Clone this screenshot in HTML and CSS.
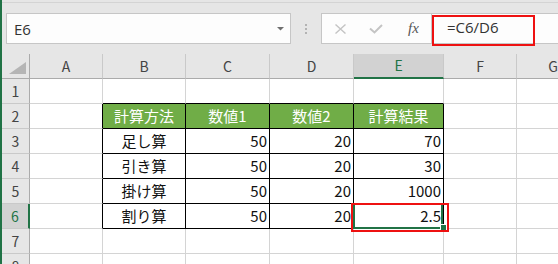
FILE: index.html
```html
<!DOCTYPE html>
<html lang="ja">
<head>
    <meta charset="UTF-8">
    <title>計算方法</title>
    <link rel="stylesheet" href="styles.css">
</head>
<body>
<div class="app">
    <div class="ribbon-edge"></div>

    <!-- Formula bar -->
    <div class="formula-bar">
        <div class="name-box">
            <span class="cell-ref">E6</span>
            <svg class="dropdown" width="7" height="4" viewBox="0 0 7 4"><polygon points="0,0 7,0 3.5,3.5" fill="#6f6f6f"/></svg>
        </div>
        <div class="grip"><i></i><i></i><i></i></div>
        <div class="fx-buttons">
            <span class="slot">
                <svg width="11" height="10" viewBox="0 0 11 10"><path d="M0.5 0.5 L10.5 9.5 M10.5 0.5 L0.5 9.5" stroke="#c4c4c4" stroke-width="1.4" fill="none"/></svg>
            </span>
            <span class="slot">
                <svg width="14" height="10" viewBox="0 0 14 10"><polyline points="1,4.5 5.5,8.5 13,1" stroke="#c4c4c4" stroke-width="2" fill="none"/></svg>
            </span>
            <span class="slot fx">fx</span>
        </div>
        <div class="formula-input">
            <span class="formula">=C6/D6</span>
            <div class="mark formula-mark"></div>
        </div>
    </div>

    <!-- Worksheet -->
    <div class="sheet">
        <div class="cell corner">
            <svg width="28" height="24" viewBox="0 0 28 24"><polygon points="24,8 24,20 7,20" fill="#b5b5b5"/></svg>
        </div>
        <div class="cell ch">A</div>
        <div class="cell ch">B</div>
        <div class="cell ch">C</div>
        <div class="cell ch">D</div>
        <div class="cell ch sel">E</div>
        <div class="cell ch">F</div>
        <div class="cell ch">G</div>

        <div class="cell rh">1</div>
        <div class="cell"></div>
        <div class="cell edge-b"></div>
        <div class="cell edge-b"></div>
        <div class="cell edge-b"></div>
        <div class="cell edge-b"></div>
        <div class="cell"></div>
        <div class="cell"></div>

        <div class="cell rh">2</div>
        <div class="cell edge-r"></div>
        <div class="cell tb head">計算方法</div>
        <div class="cell tb head">数値1</div>
        <div class="cell tb head">数値2</div>
        <div class="cell tb head">計算結果</div>
        <div class="cell"></div>
        <div class="cell"></div>

        <div class="cell rh">3</div>
        <div class="cell edge-r"></div>
        <div class="cell tb txt">足し算</div>
        <div class="cell tb num">50</div>
        <div class="cell tb num">20</div>
        <div class="cell tb num">70</div>
        <div class="cell"></div>
        <div class="cell"></div>

        <div class="cell rh">4</div>
        <div class="cell edge-r"></div>
        <div class="cell tb txt">引き算</div>
        <div class="cell tb num">50</div>
        <div class="cell tb num">20</div>
        <div class="cell tb num">30</div>
        <div class="cell"></div>
        <div class="cell"></div>

        <div class="cell rh">5</div>
        <div class="cell edge-r"></div>
        <div class="cell tb txt">掛け算</div>
        <div class="cell tb num">50</div>
        <div class="cell tb num">20</div>
        <div class="cell tb num">1000</div>
        <div class="cell"></div>
        <div class="cell"></div>

        <div class="cell rh sel">6</div>
        <div class="cell edge-r"></div>
        <div class="cell tb txt">割り算</div>
        <div class="cell tb num">50</div>
        <div class="cell tb num">20</div>
        <div class="cell tb num active">2.5
            <div class="sel-box"></div>
            <div class="fill-handle"></div>
            <div class="mark cell-mark"></div>
        </div>
        <div class="cell"></div>
        <div class="cell"></div>

        <div class="cell rh">7</div>
        <div class="cell"></div>
        <div class="cell"></div>
        <div class="cell"></div>
        <div class="cell"></div>
        <div class="cell"></div>
        <div class="cell"></div>
        <div class="cell"></div>

        <div class="cell rh">8</div>
        <div class="cell"></div>
        <div class="cell"></div>
        <div class="cell"></div>
        <div class="cell"></div>
        <div class="cell"></div>
        <div class="cell"></div>
        <div class="cell"></div>
    </div>
</div>
</body>
</html>
```

FILE: styles.css
```css
body {
    margin: 0;
    font-family: "Noto Sans CJK JP", "Noto Sans", sans-serif;
}
.app {
    width: 558px;
    height: 264px;
    overflow: hidden;
    box-sizing: border-box;
    border-left: 2px solid #217346;
    background-color: #e6e6e6;
}
.ribbon-edge {
    height: 2px;
    border-bottom: 1px solid #d4d4d4;
}
/* Formula bar */
.formula-bar {
    display: flex;
    height: 31px;
    margin-top: 10px;
    font-family: "Open Sans", "Noto Sans", sans-serif;
    font-size: 15px;
    color: #333;
}
.formula-bar > div {
    flex-shrink: 0;
}
.name-box {
    width: 285px;
    margin-left: 4px;
    box-sizing: border-box;
    display: flex;
    align-items: center;
    padding: 0 6px 0 7px;
    background-color: #fdfdfd;
    border: 1px solid #c6c6c6;
}
.cell-ref {
    flex: 1;
    line-height: 27px;
    padding-top: 2px;
}
.dropdown {
    display: block;
}
.grip {
    width: 30px;
    display: flex;
    flex-direction: column;
    align-items: center;
    justify-content: center;
    gap: 2px;
}
.grip i {
    display: block;
    width: 2px;
    height: 2px;
    background-color: #b3b3b3;
}
.fx-buttons {
    width: 110px;
    box-sizing: border-box;
    display: flex;
    padding-left: 1px;
    background-color: #fdfdfd;
    border: 1px solid #c6c6c6;
    border-right: none;
}
.slot {
    width: 35px;
    display: flex;
    align-items: center;
    justify-content: center;
}
.fx {
    font-family: "Liberation Serif", serif;
    font-style: italic;
    font-size: 15px;
    color: #555;
    padding-left: 3px;
    padding-bottom: 1px;
}
.formula-input {
    position: relative;
    width: 200px;
    box-sizing: border-box;
    padding-left: 15px;
    line-height: 26px;
    background-color: #fdfdfd;
    border: 1px solid #c6c6c6;
}
.mark {
    position: absolute;
    box-sizing: border-box;
    border: 2px solid #ee1111;
}
.formula-mark {
    left: 0;
    top: 1px;
    width: 103px;
    height: 31px;
}
/* Worksheet grid */
.sheet {
    display: grid;
    grid-template-columns: 28px 73px 83px 84px 84px 90px 73px 73px;
    grid-auto-rows: 25px;
    margin-top: 10px;
    background-color: #fff;
}
.cell {
    box-sizing: border-box;
    padding: 0 3px;
    border-right: 1px solid #d4d4d4;
    border-bottom: 1px solid #d4d4d4;
    font-size: 15px;
    line-height: 24px;
    white-space: nowrap;
    color: #111;
}
.ch,
.rh,
.corner {
    background-color: #e6e6e6;
    text-align: center;
    font-size: 14px;
    color: #444;
    padding: 0;
}
.ch {
    border-right-color: #c9c9c9;
    border-bottom-color: #ababab;
}
.rh {
    border-right-color: #ababab;
    border-bottom-color: #c9c9c9;
}
.corner {
    border-right-color: #ababab;
    border-bottom-color: #ababab;
}
.corner svg {
    display: block;
}
.ch.sel {
    background-color: #d2d2d2;
    color: #217346;
    border-bottom: 2px solid #217346;
    line-height: 23px;
}
.rh.sel {
    background-color: #d2d2d2;
    color: #217346;
    border-right: 2px solid #217346;
}
/* Table with black borders */
.tb {
    border-right-color: #000;
    border-bottom-color: #000;
}
.edge-b {
    border-bottom-color: #000;
}
.edge-r {
    border-right-color: #000;
}
.head {
    background-color: #70ad47;
    color: #fff;
    text-align: center;
}
.txt {
    text-align: center;
}
.num {
    text-align: right;
    padding-right: 2px;
}
/* Active cell */
.active {
    position: relative;
}
.sel-box {
    position: absolute;
    left: -1px;
    top: -1px;
    width: 90px;
    height: 26px;
    box-sizing: border-box;
    border: 2px solid #217346;
}
.fill-handle {
    position: absolute;
    left: 86px;
    top: 20px;
    width: 5px;
    height: 5px;
    background-color: #217346;
    border: 1px solid #fff;
}
.cell-mark {
    left: -3px;
    top: -1px;
    width: 98px;
    height: 29px;
}
```
